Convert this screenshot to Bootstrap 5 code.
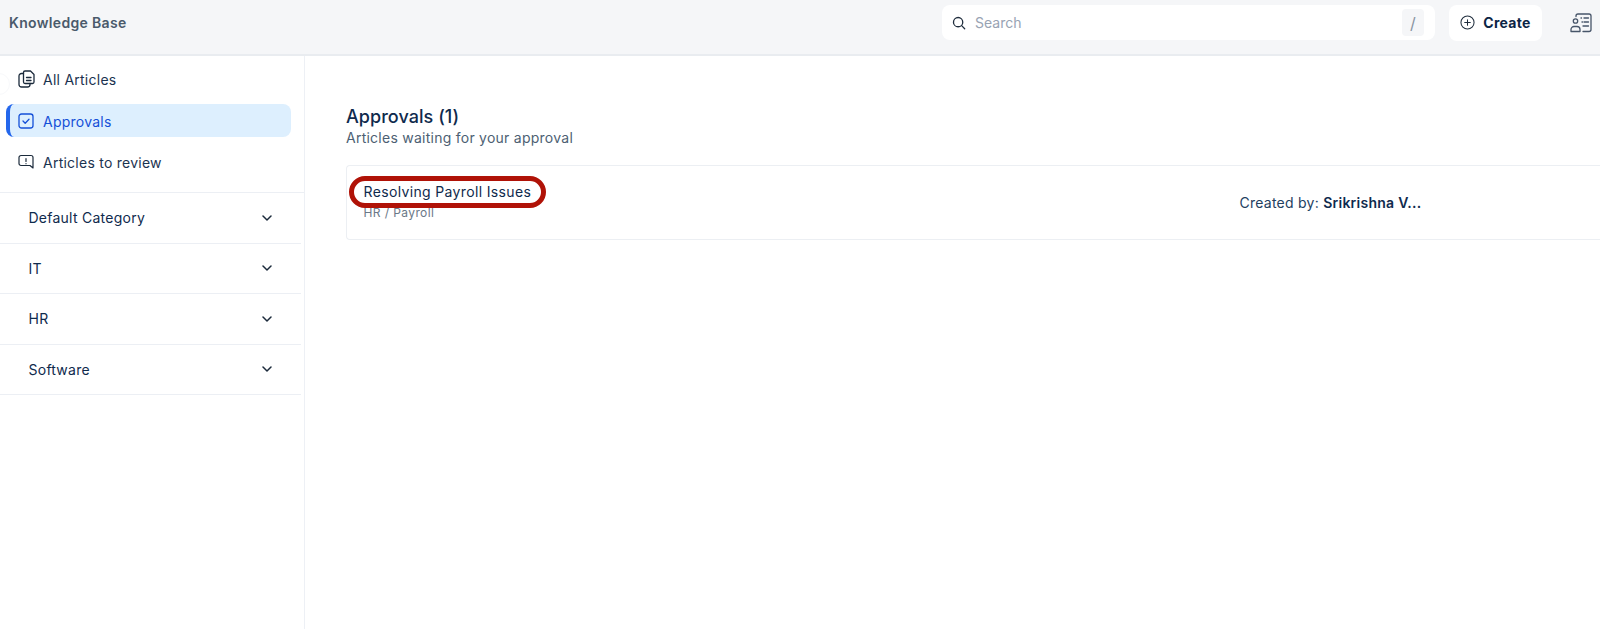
<!doctype html>
<html lang="en">
<head>
<meta charset="utf-8">
<title>Knowledge Base</title>
<link href="https://cdn.jsdelivr.net/npm/bootstrap@5.3.0/dist/css/bootstrap.min.css" rel="stylesheet">
<style>
html,body{height:100%;overflow:hidden}
body{font-family:Inter,"Liberation Sans",sans-serif;color:#0f2a4d;background:#fff;font-size:14px;letter-spacing:.25px}
.kb-top{height:56px;background:#f5f6f8;border-bottom:2px solid #e9ecf0;padding:0 0 9px 9px}
.kb-brand{font-size:14px;font-weight:600;color:#4a5a6b;letter-spacing:.33px}
.kb-search{width:493px;height:35px;background:#fff;border-radius:8px;margin-left:auto;padding:0 11px 0 10px}
.kb-search-text{color:#98a3b3;font-size:14px;margin-left:9px;letter-spacing:0}
.kb-slash{width:22px;height:27px;background:#f5f6f8;border-radius:4px;color:#8893a1;font-size:16px;margin-left:auto}
.kb-create{width:93px;height:36px;background:#fff;border-radius:8px;margin-left:14px;gap:8px;font-weight:700;font-size:14px;color:#0b2545;letter-spacing:.3px}
.kb-people{margin-left:28px;margin-right:8px}
.kb-body{height:573px;position:relative}
.kb-handle{position:absolute;left:-12px;top:17px;width:22px;height:22px;border:1px solid #f8f9fb;border-radius:50%;background:#fff}
.kb-side{width:305px;border-right:1px solid #edf0f5;flex:none}
.kb-nav{height:137px;padding:3px 13px 0 6px;border-bottom:1px solid #eceff4}
.kb-item{height:32px;border-radius:8px;padding-left:12px;gap:9px;color:#1b3350;margin-bottom:10px;font-size:14px;text-decoration:none}
.kb-item-on{height:33px;margin-bottom:9px;background:#ddeffe;color:#1550d8;border-left:4px solid #2467ec;padding-left:8px;padding-top:1px}
.kb-item:first-child{margin-top:4px;margin-bottom:9px;gap:8px}
.kb-cat{height:50.5px;border-bottom:1px solid #eceff4;padding:0 29px 0 28.500px;width:301px;color:#0f2a4d;font-weight:400}
.kb-main{padding:50px 0 0 41px;overflow:hidden}
.kb-h{font-size:18px;font-weight:500;line-height:22px;color:#0f2a4d;letter-spacing:.05px}
.kb-sub{font-size:14px;line-height:20px;color:#4d5f73;margin-bottom:17px}
.kb-row{height:75px;border:1px solid #eceff3;border-right:0;border-radius:4px 0 0 4px;padding-left:16.500px;width:1300px}
.kb-left{width:876px}
.kb-title{position:relative;font-size:14px;font-weight:400;line-height:20px;color:#0f2a4d;margin-top:16px;width:max-content;letter-spacing:.35px}
.kb-title::after{content:"";position:absolute;left:-15px;right:-15px;top:-6px;bottom:-6px;border:5px solid #b01207;border-radius:16px}
.kb-path{font-size:12px;line-height:16px;color:#6b7888;margin-top:3px;letter-spacing:.4px}
.kb-by{color:#23405f;font-size:14px}
.kb-by b{font-weight:600;color:#0f2a4d}
</style>
</head>
<body>
<header class="kb-top d-flex align-items-center">
  <div class="kb-brand">Knowledge Base</div>
  <div class="kb-search d-flex align-items-center">
    <svg width="14" height="14" viewBox="0 0 16 16" fill="none" stroke="#1f2d3d" stroke-width="1.500" stroke-linecap="round"><circle cx="7" cy="7" r="5.300"/><path d="M11 11l3.500 3.500"/></svg>
    <span class="kb-search-text">Search</span>
    <span class="kb-slash d-flex align-items-center justify-content-center">/</span>
  </div>
  <div class="kb-create d-flex align-items-center justify-content-center">
    <svg width="15" height="15" viewBox="0 0 16 16" fill="none" stroke="#1f2d3d" stroke-width="1.100" stroke-linecap="round"><circle cx="8" cy="8" r="7"/><path d="M8 5v6M5 8h6"/></svg>
    <span>Create</span>
  </div>
  <svg class="kb-people" width="22" height="20" viewBox="0 0 22 20" fill="none" stroke="#475569" stroke-width="1.300" stroke-linecap="round" stroke-linejoin="round"><path d="M6 3.500V3a2 2 0 0 1 2-2h11a2 2 0 0 1 2 2v13.500a2 2 0 0 1-2 2h-6"/><circle cx="5.500" cy="8" r="2.200"/><path d="M1 18.500v-2a3 3 0 0 1 3-3h3a3 3 0 0 1 3 3v2z"/><path d="M11 5h.5M14 5h4.500M12 9h.5M14 9h4.500M13 13h5.500"/></svg>
</header>
<div class="kb-body d-flex">
  <div class="kb-handle"></div>
  <aside class="kb-side">
    <nav class="kb-nav">
      <a class="kb-item d-flex align-items-center" href="#">
        <svg width="17" height="18" viewBox="0 0 17 18" fill="none" stroke="#1b2a3b" stroke-width="1.300" stroke-linecap="round" stroke-linejoin="round"><path d="M7 1h5.500L16 4.500V12a1.500 1.500 0 0 1-1.500 1.500H7A1.500 1.500 0 0 1 5.500 12V2.500A1.500 1.500 0 0 1 7 1z"/><path d="M5.500 3.500H3.500A2.500 2.500 0 0 0 1 6v8.500A2.500 2.500 0 0 0 3.500 17h6a2.500 2.500 0 0 0 2.500-2.500v-1"/><path d="M8.500 7.500h4.500M8.500 10.500h4.500"/></svg>
        <span>All Articles</span>
      </a>
      <a class="kb-item kb-item-on d-flex align-items-center" href="#">
        <svg width="16" height="16" viewBox="0 0 16 16" fill="none" stroke="#1550d8" stroke-width="1.300" stroke-linecap="round" stroke-linejoin="round"><rect x="1" y="1" width="14" height="14" rx="2.500"/><path d="M5 8l2.200 2.200L11 6.200"/></svg>
        <span>Approvals</span>
      </a>
      <a class="kb-item d-flex align-items-center" href="#">
        <svg width="16" height="16" viewBox="0 0 16 16" fill="none" stroke="#1b2a3b" stroke-width="1.200" stroke-linecap="round" stroke-linejoin="round"><path d="M3 1.500h10a2 2 0 0 1 2 2v10.500l-3-2.500H3a2 2 0 0 1-2-2v-6a2 2 0 0 1 2-2z"/><path d="M8 4.500v3M8 9.500v.2"/></svg>
        <span>Articles to review</span>
      </a>
    </nav>
    <div class="kb-cat d-flex align-items-center justify-content-between"><span>Default Category</span><svg width="10" height="6" viewBox="0 0 10 6" fill="none" stroke="#1b2a3b" stroke-width="1.500" stroke-linecap="round" stroke-linejoin="round"><path d="M1 1l4 4 4-4"/></svg></div>
    <div class="kb-cat d-flex align-items-center justify-content-between"><span>IT</span><svg width="10" height="6" viewBox="0 0 10 6" fill="none" stroke="#1b2a3b" stroke-width="1.500" stroke-linecap="round" stroke-linejoin="round"><path d="M1 1l4 4 4-4"/></svg></div>
    <div class="kb-cat d-flex align-items-center justify-content-between"><span>HR</span><svg width="10" height="6" viewBox="0 0 10 6" fill="none" stroke="#1b2a3b" stroke-width="1.500" stroke-linecap="round" stroke-linejoin="round"><path d="M1 1l4 4 4-4"/></svg></div>
    <div class="kb-cat d-flex align-items-center justify-content-between"><span>Software</span><svg width="10" height="6" viewBox="0 0 10 6" fill="none" stroke="#1b2a3b" stroke-width="1.500" stroke-linecap="round" stroke-linejoin="round"><path d="M1 1l4 4 4-4"/></svg></div>
  </aside>
  <main class="kb-main flex-grow-1">
    <div class="kb-h">Approvals (1)</div>
    <div class="kb-sub">Articles waiting for your approval</div>
    <div class="kb-row d-flex align-items-start">
      <div class="kb-left">
        <div class="kb-title">Resolving Payroll Issues</div>
        <div class="kb-path">HR / Payroll</div>
      </div>
      <div class="kb-by align-self-center">Created by: <b>Srikrishna V...</b></div>
    </div>
  </main>
</div>
<script src="https://cdn.jsdelivr.net/npm/bootstrap@5.3.0/dist/js/bootstrap.bundle.min.js"></script>
</body>
</html>
